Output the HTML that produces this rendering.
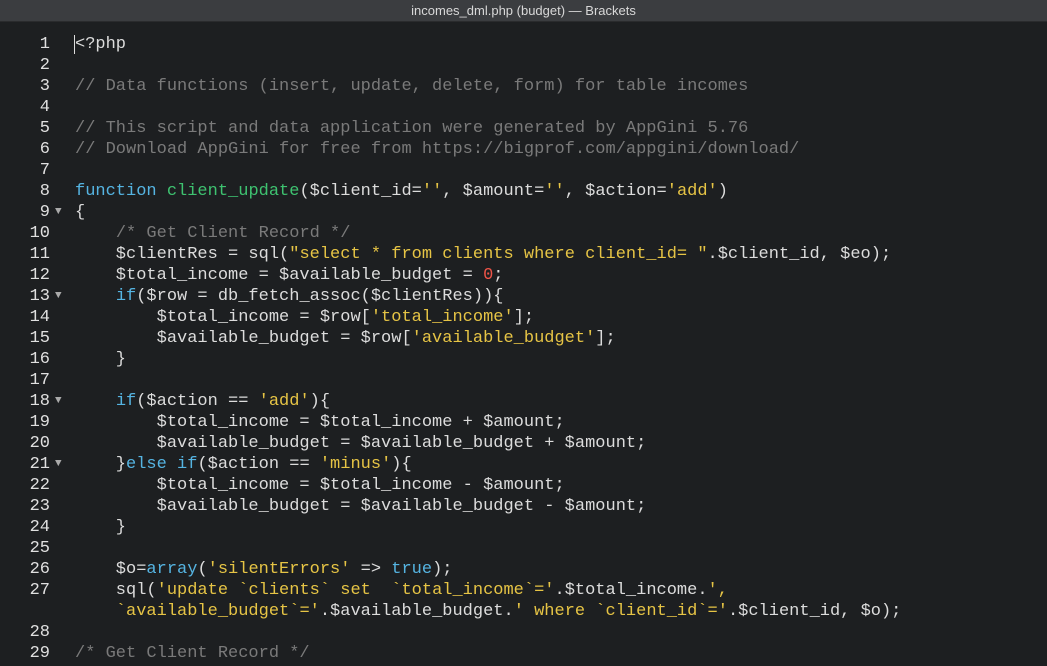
<!DOCTYPE html>
<html><head><meta charset="utf-8"><style>
html,body{margin:0;padding:0;background:#1d1f21;width:1047px;height:666px;overflow:hidden}
.tb{height:22px;background:#3b3d40;border-bottom:1px solid #2a2b2d;color:#d8d8d8;font:13px "Liberation Sans",sans-serif;text-align:center;line-height:22px;box-sizing:border-box}
.ed{position:absolute;left:0;top:0;width:1047px;font:17px/21px "Liberation Mono",monospace;color:#dcdcdc}
.ln{position:absolute;left:0;width:50px;text-align:right;color:#e0e0e0}
.ar{position:absolute;left:55px;color:#aaa;font-size:11px}
.cd{position:absolute;left:75px;white-space:pre}
.c{color:#7a7a7a}.k{color:#55b4e2}.f{color:#3ec270}.s{color:#e6c445}.n{color:#ef5448}
.cur{position:absolute;left:74px;top:35px;width:1px;height:19px;background:#ddd}
</style></head><body>
<div class="tb">incomes_dml.php (budget) — Brackets</div>
<div class="ed" id="e"></div>
<script>
var L=[
'&lt;?php','',
'<span class="c">// Data functions (insert, update, delete, form) for table incomes</span>','',
'<span class="c">// This script and data application were generated by AppGini 5.76</span>',
'<span class="c">// Download AppGini for free from https://bigprof.com/appgini/download/</span>','',
'<span class="k">function</span> <span class="f">client_update</span>($client_id=<span class="s">\'\'</span>, $amount=<span class="s">\'\'</span>, $action=<span class="s">\'add\'</span>)',
'{',
'    <span class="c">/* Get Client Record */</span>',
'    $clientRes = sql(<span class="s">"select * from clients where client_id= "</span>.$client_id, $eo);',
'    $total_income = $available_budget = <span class="n">0</span>;',
'    <span class="k">if</span>($row = db_fetch_assoc($clientRes)){',
'        $total_income = $row[<span class="s">\'total_income\'</span>];',
'        $available_budget = $row[<span class="s">\'available_budget\'</span>];',
'    }','',
'    <span class="k">if</span>($action == <span class="s">\'add\'</span>){',
'        $total_income = $total_income + $amount;',
'        $available_budget = $available_budget + $amount;',
'    }<span class="k">else if</span>($action == <span class="s">\'minus\'</span>){',
'        $total_income = $total_income - $amount;',
'        $available_budget = $available_budget - $amount;',
'    }','',
'    $o=<span class="k">array</span>(<span class="s">\'silentErrors\'</span> =&gt; <span class="k">true</span>);',
'    sql(<span class="s">\'update `clients` set  `total_income`=\'</span>.$total_income.<span class="s">\',</span>',
'    <span class="s">`available_budget`=\'</span>.$available_budget.<span class="s">\' where `client_id`=\'</span>.$client_id, $o);',
'',
'<span class="c">/* Get Client Record */</span>'];
var nums=[1,2,3,4,5,6,7,8,9,10,11,12,13,14,15,16,17,18,19,20,21,22,23,24,25,26,27,'',28,29];
var fold={9:1,13:1,18:1,21:1};
var h='<div class="cur"></div>';
for(var i=0;i<L.length;i++){var t=34+i*21;
h+='<div class="ln" style="top:'+t+'px">'+nums[i]+'</div>';
if(fold[nums[i]])h+='<div class="ar" style="top:'+t+'px">▼</div>';
h+='<div class="cd" style="top:'+t+'px">'+L[i]+'</div>';}
document.getElementById('e').innerHTML=h;
</script>
</body></html>
